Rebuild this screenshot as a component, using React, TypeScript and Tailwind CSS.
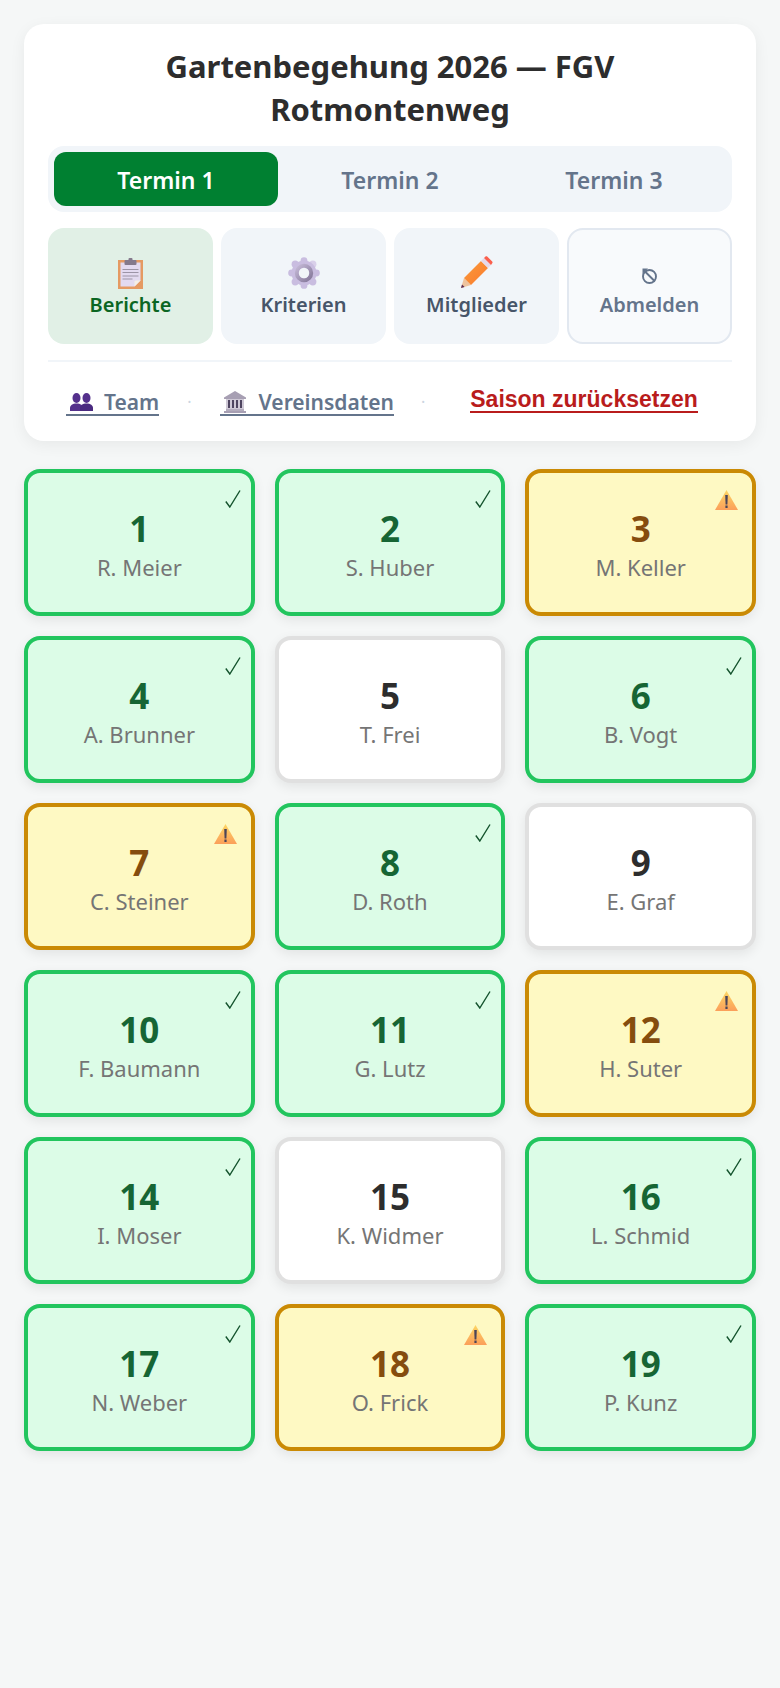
const tiles = [
  { n: 1, name: 'R. Meier', s: 'ok' },
  { n: 2, name: 'S. Huber', s: 'ok' },
  { n: 3, name: 'M. Keller', s: 'warn' },
  { n: 4, name: 'A. Brunner', s: 'ok' },
  { n: 5, name: 'T. Frei', s: 'none' },
  { n: 6, name: 'B. Vogt', s: 'ok' },
  { n: 7, name: 'C. Steiner', s: 'warn' },
  { n: 8, name: 'D. Roth', s: 'ok' },
  { n: 9, name: 'E. Graf', s: 'none' },
  { n: 10, name: 'F. Baumann', s: 'ok' },
  { n: 11, name: 'G. Lutz', s: 'ok' },
  { n: 12, name: 'H. Suter', s: 'warn' },
  { n: 14, name: 'I. Moser', s: 'ok' },
  { n: 15, name: 'K. Widmer', s: 'none' },
  { n: 16, name: 'L. Schmid', s: 'ok' },
  { n: 17, name: 'N. Weber', s: 'ok' },
  { n: 18, name: 'O. Frick', s: 'warn' },
  { n: 19, name: 'P. Kunz', s: 'ok' },
];

const ClipboardIcon = () => (
  <svg width="25" height="31" viewBox="0 0 25 31">
    <rect x="0" y="2" width="25" height="29" fill="#e59a62" />
    <path d="M2.5 4.5h20v18l-6 6h-14z" fill="#e3daf0" />
    <path d="M16.5 28.5l6-6h-5l-1 1z" fill="#f5efe6" />
    <rect x="6.5" y="2" width="12" height="5" rx="1" fill="#84798c" />
    <rect x="10.5" y="0" width="4" height="3" rx="1" fill="#84798c" />
    <path d="M4.5 11.5h16M4.5 14.5h16M4.5 18h16M4.5 21h10" stroke="#9c94a6" strokeWidth="1" />
  </svg>
);

const GearIcon = () => (
  <svg width="32" height="32" viewBox="0 0 32 32">
    <defs>
      <linearGradient id="gearRing" x1="0" y1="0" x2="1" y2="1">
        <stop offset="0" stopColor="#c4b9d6" />
        <stop offset="1" stopColor="#85789a" />
      </linearGradient>
    </defs>
    <g fill="#c9bde0">
      <circle cx="16" cy="3.6" r="3.4" />
      <circle cx="16" cy="28.4" r="3.4" />
      <circle cx="3.6" cy="16" r="3.4" />
      <circle cx="28.4" cy="16" r="3.4" />
      <circle cx="7.2" cy="7.2" r="3.6" />
      <circle cx="24.8" cy="7.2" r="3.6" fill="#d9d0ea" />
      <circle cx="7.2" cy="24.8" r="3.6" />
      <circle cx="24.8" cy="24.8" r="3.6" />
      <circle cx="16" cy="16" r="12.5" />
    </g>
    <circle cx="16" cy="16" r="7.2" fill="none" stroke="url(#gearRing)" strokeWidth="4" />
    <circle cx="16" cy="16" r="5.2" fill="#f1f5f9" />
  </svg>
);

const PencilIcon = () => (
  <svg width="33" height="33" viewBox="0 0 33 33">
    <defs>
      <linearGradient id="pencilBody" x1="0" y1="0" x2="1" y2="1">
        <stop offset="0" stopColor="#f99a3c" />
        <stop offset="1" stopColor="#fb7a2c" />
      </linearGradient>
    </defs>
    <path d="M1 32l3-10 7 7z" fill="#eec39e" />
    <path d="M1 32l1-3.6 2.6 2.6z" fill="#5a2a52" />
    <path d="M4 22L21 5l7 7-17 17z" fill="url(#pencilBody)" />
    <path d="M21 5l3-3 7 7-3 3z" fill="#e6d9ea" />
    <path d="M24 2l1.5-1.5c.5-.5 1.2-.5 1.7 0l5 5c.5.5.5 1.2 0 1.7L31 9z" fill="#fa5f4d" />
  </svg>
);

// circle with a slash and a small wedge top left, the glyph on the Abmelden button
const LogoutIcon = () => (
  <svg className="mb-[5px]" width="17" height="16" viewBox="0 0 17 16" fill="none" stroke="#64748b" strokeWidth="1.9">
    <circle cx="8.5" cy="8.5" r="6.5" />
    <path d="M4 3.5L14 13.5" />
    <path d="M1.5 0.5h5.5l-5.5 5.5z" fill="#64748b" stroke="none" />
  </svg>
);

const PeopleIcon = () => (
  <svg width="23" height="18" viewBox="0 0 23 18" fill="#54308c">
    <ellipse cx="6.5" cy="5" rx="4" ry="5" />
    <ellipse cx="16.5" cy="5" rx="4" ry="5" />
    <path d="M0 18v-3c0-2.5 2.5-4.5 6.5-4.5s6.5 2 6.5 4.5v3z" />
    <path d="M10 18v-3c0-2.5 2.5-4.5 6.5-4.5s6.5 2 6.5 4.5v3z" fill="#4a2a80" />
  </svg>
);

const BankIcon = () => (
  <svg width="22" height="22" viewBox="0 0 22 22">
    <path d="M11 0L22 6.5V8H0V6.5z" fill="#a79fb3" />
    <rect x="2" y="18" width="18" height="2" fill="#b3acbd" />
    <rect x="0" y="20" width="22" height="2" fill="#a79fb3" />
    <rect x="2" y="8" width="18" height="10" fill="#cfc9d6" />
    <path d="M5 9v8M9 9v8M13 9v8M17 9v8" stroke="#4e4560" strokeWidth="2" />
  </svg>
);

const WarnIcon = () => (
  <svg width="23" height="20" viewBox="0 0 23 20">
    <defs>
      <linearGradient id="warnFill" x1="0" y1="0" x2="0" y2="1">
        <stop offset="0" stopColor="#fdd663" />
        <stop offset="1" stopColor="#fb9f5a" />
      </linearGradient>
    </defs>
    <path d="M11.5 0L23 20H0z" fill="url(#warnFill)" />
    <path d="M10.2 5h2.6l-.4 9.5h-1.8z" fill="#4a4458" />
    <rect x="10.4" y="15.5" width="2.2" height="2.5" fill="#4a4458" />
  </svg>
);

const CheckIcon = () => (
  <svg width="16" height="18" viewBox="0 0 16 18" fill="none" stroke="#14532d" strokeWidth="1.4">
    <path d="M0.8 11.5L4.8 17L15 0.5" />
  </svg>
);

const Tile = ({ n, name, s }: { n: number; name: string; s: string }) => {
  const box =
    s === 'ok'
      ? 'bg-[#dcfce7] border-[#22c55e]'
      : s === 'warn'
        ? 'bg-[#fef9c3] border-[#ca8a04]'
        : 'bg-white border-[#e0e0e0]';
  const numColor = s === 'ok' ? 'text-[#166534]' : s === 'warn' ? 'text-[#854d0e]' : 'text-[#2d2d2d]';
  return (
    <div
      className={`relative flex h-[147px] flex-col items-center justify-center rounded-2xl border-4 shadow-[0_4px_12px_rgba(0,0,0,0.08)] ${box}`}
    >
      {s === 'ok' && (
        <span className="absolute right-[10px] top-[17px] flex">
          <CheckIcon />
        </span>
      )}
      {s === 'warn' && (
        <span className="absolute right-[14px] top-[17px] flex">
          <WarnIcon />
        </span>
      )}
      <div className={`text-[35px] font-bold leading-[48px] ${numColor}`}>{n}</div>
      <div className="text-[22px] leading-[28px] text-[#757575]">{name}</div>
    </div>
  );
};

const NavButton = ({ icon, label, cls }: { icon: React.ReactNode; label: string; cls: string }) => (
  <button className={`flex h-[116px] flex-col items-center justify-center rounded-2xl text-[20px] font-semibold leading-[27px] ${cls}`}>
    <span className="flex h-[34px] items-end">{icon}</span>
    <span className="mt-0.5">{label}</span>
  </button>
);

export default function App() {
  return (
    <div className="min-h-[1688px] bg-[#f5f7f7] p-6 font-['Noto_Sans','Open_Sans',sans-serif]">
      <div className="rounded-[20px] bg-white px-6 pt-[21px] shadow-[0_4px_16px_rgba(0,0,0,0.06)]">
        <h1 className="text-center text-[31px] font-bold leading-[43px] text-[#2d2d2d]">
          Gartenbegehung 2026 — FGV
          <br />
          Rotmontenweg
        </h1>
        <div className="mt-[15px] flex h-[66px] rounded-2xl bg-[#f1f5f9] p-[6px]">
          <div className="flex flex-1 items-center justify-center rounded-xl bg-[#008031] pt-0.5 text-[23px] font-semibold text-white">
            Termin 1
          </div>
          <div className="flex flex-1 items-center justify-center pt-0.5 text-[23px] font-semibold text-[#64748b]">Termin 2</div>
          <div className="flex flex-1 items-center justify-center pt-0.5 text-[23px] font-semibold text-[#64748b]">Termin 3</div>
        </div>
        <div className="mt-4 grid grid-cols-4 gap-2">
          <NavButton icon={<ClipboardIcon />} label="Berichte" cls="bg-[#e1f0e6] text-[#0b6623]" />
          <NavButton icon={<GearIcon />} label="Kriterien" cls="bg-[#f1f5f9] text-[#475569]" />
          <NavButton icon={<PencilIcon />} label="Mitglieder" cls="bg-[#f1f5f9] text-[#475569]" />
          <NavButton
            icon={<LogoutIcon />}
            label="Abmelden"
            cls="border-2 border-[#e2e8f0] bg-[#f8fafc] text-[#64748b]"
          />
        </div>
        <div className="mt-4 flex h-[81px] items-center border-t-2 border-[#f1f5f9] pl-[18px]">
          <a className="mt-[3px] flex items-center gap-[11px] border-b-2 border-[#64748b] pl-1 text-[21px] font-semibold leading-[24px] text-[#64748b]">
            <PeopleIcon />
            Team
          </a>
          <span className="mx-[28px] text-[#cbd5e1]">·</span>
          <a className="mt-[3px] flex items-center gap-[13px] border-b-2 border-[#64748b] pl-1 text-[21px] font-semibold leading-[24px] text-[#64748b]">
            <BankIcon />
            Vereinsdaten
          </a>
          <span className="ml-[27px] mr-[45px] text-[#cbd5e1]">·</span>
          <a className="mb-[3px] border-b-2 border-[#b91c1c] font-['Liberation_Sans',sans-serif] text-[23px] font-bold leading-[24px] text-[#b91c1c]">
            Saison zurücksetzen
          </a>
        </div>
      </div>
      <div className="mt-7 grid grid-cols-3 gap-5">
        {tiles.map((t) => (
          <Tile key={t.n} {...t} />
        ))}
      </div>
    </div>
  );
}
